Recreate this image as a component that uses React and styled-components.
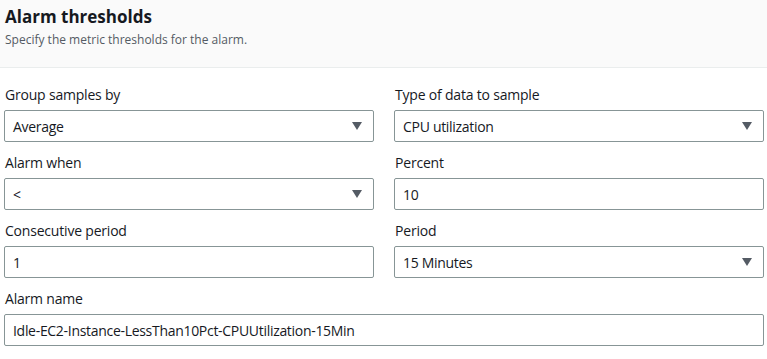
import React from "react";
import styled, { createGlobalStyle } from "styled-components";

const Global = createGlobalStyle`
  body {
    margin: 0;
    background: #ffffff;
    font-family: "Open Sans", "Noto Sans", Arial, sans-serif;
    color: #16191f;
  }
`;

const Panel = styled.div`
  width: 767px;
  min-height: 359px;
  background: #fff;
`;

const Header = styled.div`
  background: #fafafa;
  border-bottom: 1px solid #eaeded;
  height: 68px;
  padding: 5px 5px 0;
  box-sizing: border-box;
`;

const Title = styled.h2`
  margin: 0;
  font-size: 17px;
  line-height: 24px;
  font-weight: 700;
  color: #16191f;
`;

const Subtitle = styled.p`
  margin: 2px 0 0;
  font-size: 12px;
  line-height: 18px;
  color: #545b64;
`;

const Body = styled.div`
  padding: 16px 4px 0 4px;
  display: grid;
  grid-template-columns: 370px 370px;
  column-gap: 20px;
  row-gap: 10px;
`;

const Field = styled.div`
  display: flex;
  flex-direction: column;
  gap: 4px;
  grid-column: ${(p) => (p.$wide ? "1 / -1" : "auto")};
`;

const Label = styled.label`
  font-size: 14px;
  line-height: 22px;
  padding-left: 1px;
  letter-spacing: -0.2px;
  color: #16191f;
`;

const Box = styled.div`
  height: 32px;
  box-sizing: border-box;
  border: 1px solid #879596;
  border-radius: 2px;
  display: flex;
  align-items: center;
  justify-content: space-between;
  padding: 0 11px 0 8px;
  font-size: 14px;
  letter-spacing: -0.3px;
  color: #16191f;
  background: #fff;
`;

const Caret = styled.span`
  width: 0;
  height: 0;
  border-left: 5px solid transparent;
  border-right: 5px solid transparent;
  border-top: 8px solid #545b64;
`;

function Select({ value }) {
  return (
    <Box>
      <span>{value}</span>
      <Caret />
    </Box>
  );
}

const fields = [
  { label: "Group samples by", value: "Average", select: true },
  { label: "Type of data to sample", value: "CPU utilization", select: true },
  { label: "Alarm when", value: "<", select: true },
  { label: "Percent", value: "10" },
  { label: "Consecutive period", value: "1" },
  { label: "Period", value: "15 Minutes", select: true },
  { label: "Alarm name", value: "Idle-EC2-Instance-LessThan10Pct-CPUUtilization-15Min", wide: true },
];

export default function App() {
  return (
    <Panel>
      <Global />
      <Header>
        <Title>Alarm thresholds</Title>
        <Subtitle>Specify the metric thresholds for the alarm.</Subtitle>
      </Header>
      <Body>
        {fields.map((f) => (
          <Field key={f.label} $wide={f.wide}>
            <Label>{f.label}</Label>
            {f.select ? <Select value={f.value} /> : <Box>{f.value}</Box>}
          </Field>
        ))}
      </Body>
    </Panel>
  );
}
